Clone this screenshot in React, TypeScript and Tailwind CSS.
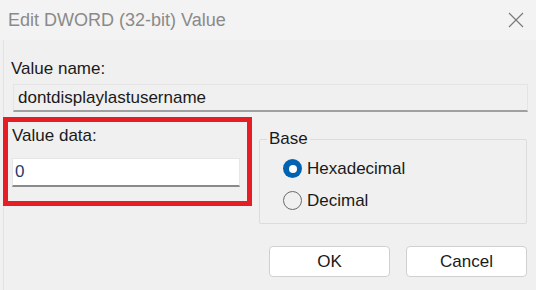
import React from "react";

export default function App() {
  return (
    <div
      className="w-[536px] h-[290px] bg-[#f0f0f0] overflow-hidden flex flex-col text-[#1a1a1a]"
      style={{ fontFamily: '"Liberation Sans", Arial, sans-serif' }}
    >
      {/* Title bar */}
      <div className="h-[40px] bg-[#f3f3f3] flex items-center justify-between pl-[8px] pr-[12px] shrink-0">
        <span className="text-[18px] text-[#8a8a8a] leading-none">Edit DWORD (32-bit) Value</span>
        <svg width="16" height="16" viewBox="0 0 16 16" className="mb-[1px]">
          <path d="M1 1 L15 15 M15 1 L1 15" stroke="#7a7a7a" strokeWidth="1.2" fill="none" />
        </svg>
      </div>

      {/* Body */}
      <div className="flex-1 ml-[3px] border-l border-[#e2e2e2] flex flex-col">
        <div className="pl-[7px] pt-[19px] text-[17px] leading-[20px]">Value name:</div>
        <div className="ml-[9px] mt-[5px] w-[515px] h-[28px] border border-[#e4e4e4] border-b-[#a0a0a0] border-b-2 bg-[#f0f0f0] flex items-center pl-[4px] text-[17px]">
          dontdisplaylastusername
        </div>

        <div className="flex mt-[5px]">
          <div className="w-[249px] h-[89px] border-[5px] border-[#e61d25] -ml-[1px] flex flex-col">
            <div className="pl-[4px] pt-[4px] text-[17px] leading-[20px]">Value data:</div>
            <div className="ml-[4px] mt-[12px] w-[228px] h-[29px] bg-white border border-[#e6e6e6] border-b-2 border-b-[#8a8a8a] flex items-center pl-[2px] text-[17px] text-[#1f3b6f]">
              0
            </div>
          </div>

          <div className="relative ml-[7px] mt-[22px] w-[268px] h-[85px] border border-[#dcdcdc] rounded-[2px]">
            <span className="absolute -top-[11px] left-[7px] px-[2px] bg-[#f0f0f0] text-[17px] leading-[20px]">Base</span>
            <div className="flex flex-col pl-[23px] pt-[19px] gap-[13px]">
              <div className="flex items-center gap-[5px] text-[17px] leading-[19px]">
                <span className="w-[19px] h-[19px] rounded-full bg-[#0063b1] flex items-center justify-center">
                  <span className="w-[8px] h-[8px] rounded-full bg-white" />
                </span>
                Hexadecimal
              </div>
              <div className="flex items-center gap-[5px] text-[17px] leading-[19px]">
                <span className="w-[19px] h-[19px] rounded-full border border-[#6b6b6b] bg-[#f0f0f0]" />
                Decimal
              </div>
            </div>
          </div>
        </div>

        <div className="flex justify-end gap-[16px] mt-[22px] pr-[9px]">
          <button className="w-[121px] h-[31px] bg-white border border-[#d0d0d0] rounded-[4px] text-[17px] text-[#1a1a1a]">OK</button>
          <button className="w-[121px] h-[31px] bg-white border border-[#d0d0d0] rounded-[4px] text-[17px] text-[#1a1a1a]">Cancel</button>
        </div>
      </div>
    </div>
  );
}
